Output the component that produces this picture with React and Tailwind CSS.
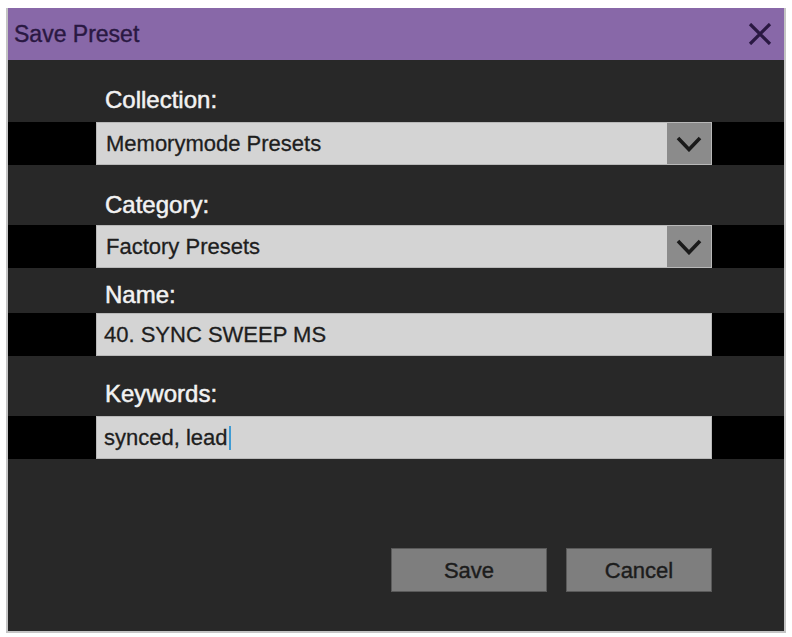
import React from "react";

const font = { fontFamily: '"Liberation Sans", Arial, sans-serif' };

function Chevron() {
  return (
    <svg width="26" height="16" viewBox="0 0 26 16" fill="none">
      <path d="M2 2 L13 13.5 L24 2" stroke="#1a1a1a" strokeWidth="3.6" strokeLinejoin="miter" />
    </svg>
  );
}

function CloseIcon() {
  return (
    <svg width="24" height="22" viewBox="0 0 24 22" fill="none">
      <path d="M2 1 L22 21 M22 1 L2 21" stroke="#2a1842" strokeWidth="3.2" />
    </svg>
  );
}

function Label({ children, className = "" }) {
  return (
    <div
      className={`pl-[97px] h-[28px] leading-[28px] text-[24px] text-[#f2f2f2] [-webkit-text-stroke:0.5px_#f2f2f2] ${className}`}
    >
      {children}
    </div>
  );
}

function Band({ children, className = "" }) {
  return (
    <div className={`flex bg-black ${className}`}>
      <div className="w-[88px] shrink-0" />
      {children}
      <div className="flex-1" />
    </div>
  );
}

function Select({ value }) {
  return (
    <div className="flex w-[616px] h-[43px] border border-[#b8b8b8]">
      <div className="flex-1 flex items-center pl-[9px] bg-[#d4d4d4] text-[22px] text-[#1e1e1e] [-webkit-text-stroke:0.3px_#1e1e1e]">
        {value}
      </div>
      <div className="w-[44px] flex items-center justify-center bg-[#8b8b8b]">
        <Chevron />
      </div>
    </div>
  );
}

function TextField({ value, caret }) {
  return (
    <div className="flex items-center w-[616px] h-[43px] pl-[7px] bg-[#d4d4d4] border border-[#b8b8b8] text-[22px] text-[#1e1e1e] [-webkit-text-stroke:0.3px_#1e1e1e]">
      <span>{value}</span>
      {caret && <span className="ml-[1px] w-[2px] h-[24px] bg-[#3f9bd3]" />}
    </div>
  );
}

function Button({ children, className = "" }) {
  return (
    <button
      className={`h-[44px] bg-[#7e7e7e] border border-[#5a5a5a] text-[22px] text-[#1c1c1c] [-webkit-text-stroke:0.4px_#1c1c1c] ${className}`}
      style={font}
    >
      {children}
    </button>
  );
}

export default function App() {
  return (
    <div className="w-[792px] h-[637px] bg-white pt-[8px] pl-[6px]" style={font}>
      <div className="w-[780px] h-[625px] flex flex-col bg-[#282828] border-x-2 border-b-2 border-[#c4c4c4]">
        <div className="h-[52px] shrink-0 flex items-center justify-between bg-[#8868a8] pl-[6px] pr-[12px]">
          <span className="text-[23px] text-[#2a1842] [-webkit-text-stroke:0.4px_#2a1842]">Save Preset</span>
          <CloseIcon />
        </div>

        <Label className="mt-[26px]">Collection:</Label>
        <Band className="mt-[8px]">
          <Select value="Memorymode Presets" />
        </Band>

        <Label className="mt-[26px]">Category:</Label>
        <Band className="mt-[6px]">
          <Select value="Factory Presets" />
        </Band>

        <Label className="mt-[13px]">Name:</Label>
        <Band className="mt-[4px]">
          <TextField value="40. SYNC SWEEP MS" />
        </Band>

        <Label className="mt-[24px]">Keywords:</Label>
        <Band className="mt-[8px]">
          <TextField value="synced, lead" caret />
        </Band>

        <div className="flex justify-end gap-[19px] pr-[72px] mt-[89px]">
          <Button className="w-[156px]">Save</Button>
          <Button className="w-[146px]">Cancel</Button>
        </div>
      </div>
    </div>
  );
}
